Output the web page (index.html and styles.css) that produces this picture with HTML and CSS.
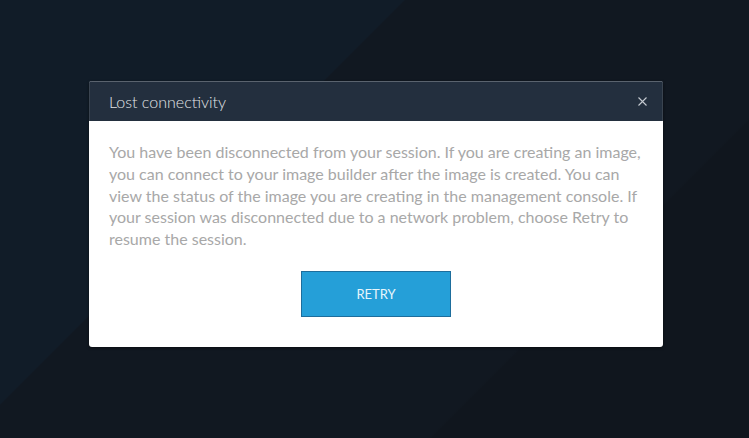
FILE: index.html
```html
<!DOCTYPE html>
<html>
<head>
<meta charset="utf-8">
<link rel="stylesheet" href="styles.css">
</head>
<body>
<div class="backdrop">
  <div class="dialog">
    <div class="dialog-header">
      <span class="dialog-title">Lost connectivity</span>
      <svg class="dialog-close" width="9" height="9" viewBox="0 0 9 9"><path d="M0.5 0.5 L8.5 8.5 M8.5 0.5 L0.5 8.5" stroke="#c4c9cf" stroke-width="1.1" fill="none"/></svg>
    </div>
    <div class="dialog-body">
      <p class="dialog-text">You have been disconnected from your session. If you are creating an image, you can connect to your image builder after the image is created. You can view the status of the image you are creating in the management console. If your session was disconnected due to a network problem, choose Retry to resume the session.</p>
      <div class="dialog-actions">
        <button class="retry-btn">RETRY</button>
      </div>
    </div>
  </div>
</div>
</body>
</html>
```

FILE: styles.css
```css
html, body {
  margin: 0;
  padding: 0;
  height: 100%;
}
body {
  font-family: Lato, "Liberation Sans", sans-serif;
}
.backdrop {
  height: 100%;
  box-sizing: border-box;
  padding-top: 81px;
  padding-left: 89px;
  background: linear-gradient(135deg, #111c28 0 34%, #111821 34.2% 73%, #10161e 73.3% 100%);
}
.dialog {
  width: 574px;
  height: 266px;
  box-sizing: border-box;
  border-radius: 3px;
  overflow: hidden;
  background: #fff;
  box-shadow: 0 1px 3px rgba(0,0,0,0.5);
}
.dialog-header {
  height: 40px;
  background: #232f3e;
  border-top: 1px solid #5a636e;
  border-left: 1px solid #3a4450;
  border-right: 1px solid #3a4450;
  box-sizing: border-box;
  display: flex;
  align-items: center;
  justify-content: space-between;
  padding: 0 15px 0 19px;
}
.dialog-title {
  color: #e2e5e8;
  font-size: 16px;
  font-weight: 300;
}
.dialog-close {
  display: block;
}
.dialog-body {
  padding: 20px 14px 0 20px;
}
.dialog-text {
  margin: 0;
  color: #a8a8a8;
  font-size: 16px;
  line-height: 21.8px;
  font-weight: 400;
}
.dialog-actions {
  display: flex;
  justify-content: center;
  padding-top: 21px;
  padding-right: 6px;
}
.retry-btn {
  width: 150px;
  height: 46px;
  background: #259fd8;
  border: 1px solid #1d6d9c;
  color: #e8f6fc;
  font-family: inherit;
  font-size: 13px;
  letter-spacing: 0;
  padding: 0;
}
```
